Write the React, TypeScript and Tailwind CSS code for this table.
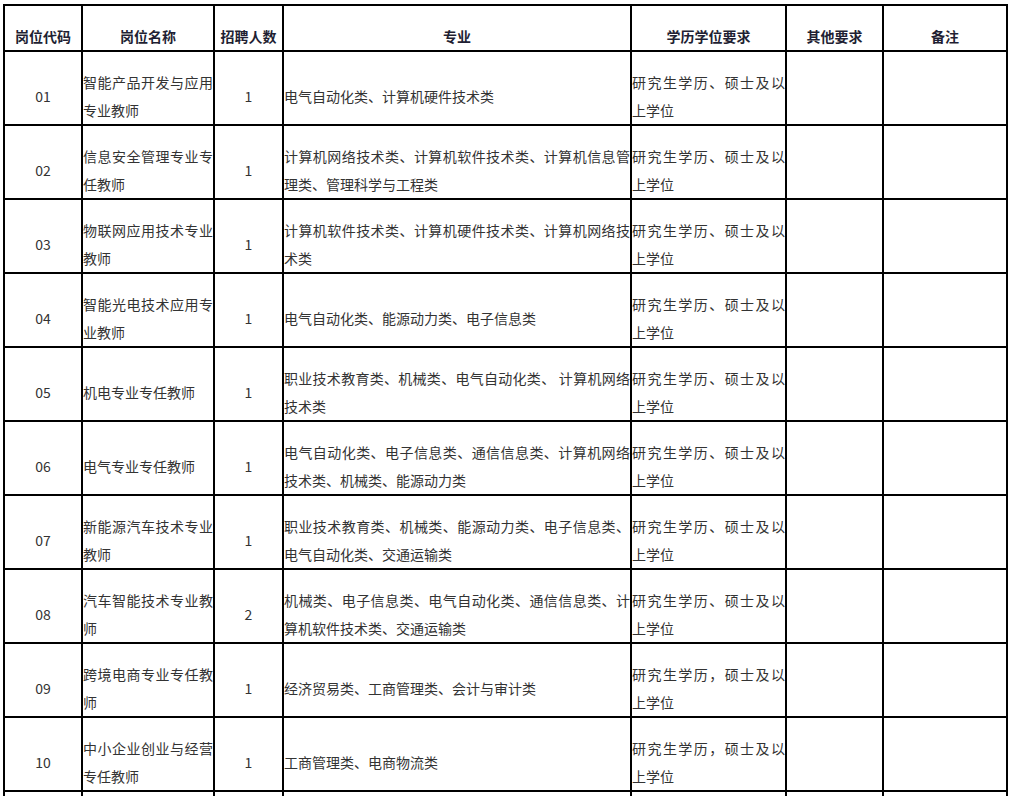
import React from "react";

const COLS = [
  "w-[78px]",
  "w-[132px]",
  "w-[69px]",
  "w-[348px]",
  "w-[155px]",
  "w-[97px]",
  "w-[124px]",
];

const HEADERS = ["岗位代码", "岗位名称", "招聘人数", "专业", "学历学位要求", "其他要求", "备注"];

const EDU_A = "研究生学历、硕士及以上学位";
const EDU_B = "研究生学历，硕士及以上学位";

const ROWS = [
  { code: "01", name: "智能产品开发与应用专业教师", num: "1", major: "电气自动化类、计算机硬件技术类", edu: EDU_A },
  { code: "02", name: "信息安全管理专业专任教师", num: "1", major: "计算机网络技术类、计算机软件技术类、计算机信息管理类、管理科学与工程类", edu: EDU_A },
  { code: "03", name: "物联网应用技术专业教师", num: "1", major: "计算机软件技术类、计算机硬件技术类、计算机网络技术类", edu: EDU_A },
  { code: "04", name: "智能光电技术应用专业教师", num: "1", major: "电气自动化类、能源动力类、电子信息类", edu: EDU_A },
  { code: "05", name: "机电专业专任教师", num: "1", major: "职业技术教育类、机械类、电气自动化类、 计算机网络技术类", edu: EDU_A },
  { code: "06", name: "电气专业专任教师", num: "1", major: "电气自动化类、电子信息类、通信信息类、计算机网络技术类、机械类、能源动力类", edu: EDU_A },
  { code: "07", name: "新能源汽车技术专业教师", num: "1", major: "职业技术教育类、机械类、能源动力类、电子信息类、电气自动化类、交通运输类", edu: EDU_A },
  { code: "08", name: "汽车智能技术专业教师", num: "2", major: "机械类、电子信息类、电气自动化类、通信信息类、计算机软件技术类、交通运输类", edu: EDU_A },
  { code: "09", name: "跨境电商专业专任教师", num: "1", major: "经济贸易类、工商管理类、会计与审计类", edu: EDU_B },
  { code: "10", name: "中小企业创业与经营专任教师", num: "1", major: "工商管理类、电商物流类", edu: EDU_B },
];

const FONT = { fontFamily: '"Noto Sans CJK SC", "Noto Sans", sans-serif' };

function Cell({ col, center, children }: { col: number; center?: boolean; children?: React.ReactNode }) {
  return (
    <div
      className={`${COLS[col]} flex h-[74px] shrink-0 items-center border-b-2 border-r-2 border-black pt-4`}
    >
      <div
        className={`w-full text-[14px] leading-[28px] text-[#333] ${center ? "text-center" : "text-justify"}`}
      >
        {children}
      </div>
    </div>
  );
}

export default function App() {
  return (
    <div className="min-h-screen bg-white pl-[3px] pt-[4px]" style={FONT}>
      <div className="inline-flex flex-col border-l-2 border-t-2 border-black">
        <div className="flex">
          {HEADERS.map((h, i) => (
            <div
              key={h}
              className={`${COLS[i]} flex h-[46px] shrink-0 items-center justify-center border-b-2 border-r-2 border-black pt-4`}
            >
              <span className="text-[14px] font-bold leading-[28px] text-[#1f1f33]">{h}</span>
            </div>
          ))}
        </div>
        {ROWS.map((r) => (
          <div key={r.code} className="flex">
            <Cell col={0} center>
              {r.code}
            </Cell>
            <Cell col={1}>{r.name}</Cell>
            <Cell col={2} center>
              {r.num}
            </Cell>
            <Cell col={3}>{r.major}</Cell>
            <Cell col={4}>{r.edu}</Cell>
            <Cell col={5} />
            <Cell col={6} />
          </div>
        ))}
        {/* next row, cut off by the window */}
        <div className="flex">
          {COLS.map((c) => (
            <div key={c} className={`${c} h-[74px] shrink-0 border-b-2 border-r-2 border-black`} />
          ))}
        </div>
      </div>
    </div>
  );
}
